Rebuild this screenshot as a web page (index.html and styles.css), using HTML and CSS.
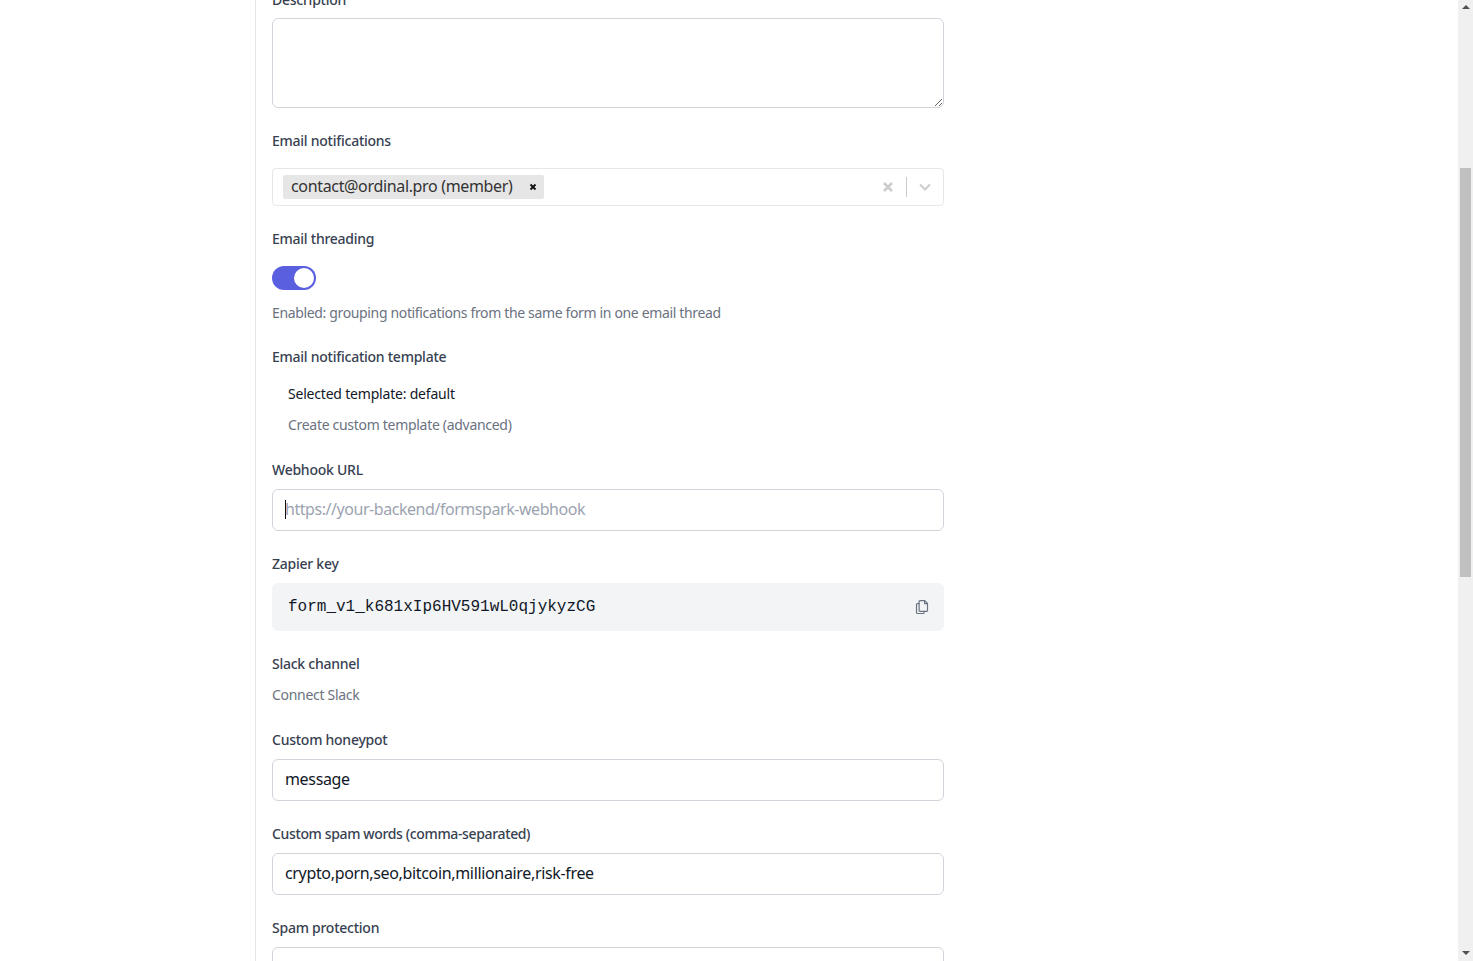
FILE: index.html
```html
<!DOCTYPE html>
<html lang="en">
<head>
    <meta charset="UTF-8">
    <title>Form settings</title>
    <link rel="stylesheet" href="styles.css">
</head>
<body>
    <div class="page">
        <main class="card">
            <div class="field">
                <label class="label">Description</label>
                <textarea class="textarea"></textarea>
            </div>

            <div class="field">
                <label class="label label-wide">Email notifications</label>
                <div class="select">
                    <div class="chip">
                        <span class="chip-text">contact@ordinal.pro (member)</span>
                        <svg class="chip-x" viewBox="0 0 8 8"><path d="M1.5 1.5l5 5M6.5 1.5l-5 5"/></svg>
                    </div>
                    <div class="select-actions">
                        <svg class="select-x" viewBox="0 0 12 12"><path d="M2 2l8 8M10 2l-8 8"/></svg>
                        <span class="select-sep"></span>
                        <svg class="select-chevron" viewBox="0 0 14 8"><path d="M2 1.500l5 5 5-5"/></svg>
                    </div>
                </div>
            </div>

            <div class="field field-toggle">
                <label class="label label-wide">Email threading</label>
                <div class="toggle"><span class="toggle-knob"></span></div>
                <p class="help">Enabled: grouping notifications from the same form in one email thread</p>
            </div>

            <div class="field field-text">
                <label class="label label-wide">Email notification template</label>
                <div class="template-current">Selected template: default</div>
                <div class="link link-indent">Create custom template (advanced)</div>
            </div>

            <div class="field">
                <label class="label">Webhook URL</label>
                <div class="input-wrap">
                    <input class="input input-empty" type="text" placeholder="https://your-backend/formspark-webhook">
                    <span class="caret"></span>
                </div>
            </div>

            <div class="field">
                <label class="label">Zapier key</label>
                <div class="key-box">
                    <code class="key">form_v1_k681xIp6HV591wL0qjykyzCG</code>
                    <svg class="copy" viewBox="0 0 16 16">
                        <path d="M6 1.700h4.800l2.700 2.700v7a.9.9 0 0 1-.9.9H6a.9.9 0 0 1-.9-.9V2.600a.9.9 0 0 1 .9-.9z"/>
                        <path d="M10.600 1.900v2.700h2.700"/>
                        <path d="M5.100 4.600H3.400a.9.9 0 0 0-.9.9v8.100a.9.9 0 0 0 .9.9h5.800a.9.9 0 0 0 .9-.9v-1.300"/>
                    </svg>
                </div>
            </div>

            <div class="field field-text">
                <label class="label label-slim">Slack channel</label>
                <div class="link">Connect Slack</div>
            </div>

            <div class="field">
                <label class="label">Custom honeypot</label>
                <input class="input" type="text" value="message">
            </div>

            <div class="field">
                <label class="label label-tight">Custom spam words (comma-separated)</label>
                <input class="input" type="text" value="crypto,porn,seo,bitcoin,millionaire,risk-free">
            </div>

            <div class="field">
                <label class="label">Spam protection</label>
                <input class="input" type="text" value="manually">
            </div>
        </main>

        <div class="scrollbar">
            <span class="arrow arrow-up"></span>
            <div class="track"><div class="thumb"></div></div>
            <span class="arrow arrow-down"></span>
        </div>
    </div>
</body>
</html>
```

FILE: styles.css
```css
* { box-sizing: border-box; }
html, body { margin: 0; height: 100%; overflow: hidden; background: #fff; }
body { font-family: "Noto Sans", sans-serif; font-size: 14px; line-height: 20px; color: #111827; }

.page { display: flex; height: 961px; overflow: hidden; }

/* the page is scrolled, so the first label is cut off at the top */
.card {
    flex: 1;
    margin: -10px 0 0 255px;
    padding-left: 16px;
    border-left: 1px solid #e5e7eb;
}

.field { width: 672px; margin-bottom: 23px; }
.field-toggle { margin-bottom: 24px; }
.field-text { margin-bottom: 25px; }
.label { display: block; margin-bottom: 9px; font-weight: 500; color: #374151; letter-spacing: -0.25px; }
.label-wide { margin-bottom: 17px; }
.label-slim { margin-bottom: 11px; }
.label-tight { letter-spacing: -0.36px; }

.textarea {
    display: block;
    width: 100%;
    height: 90px;
    margin-top: -1px;
    border: 1px solid #d1d5db;
    border-radius: 6px;
    background: #fff;
}

.select {
    display: flex;
    align-items: center;
    justify-content: space-between;
    height: 38px;
    padding-left: 10px;
    border: 1px solid #e5e7eb;
    border-radius: 4px;
}
.chip {
    display: flex;
    align-items: center;
    justify-content: space-between;
    width: 261px;
    height: 24px;
    padding: 0 7px 2px 8px;
    background: #e6e6e6;
    border-radius: 2px;
    font-size: 16px;
    color: #333;
}
.chip-text { letter-spacing: -0.34px; }
.chip-x { width: 8px; height: 8px; margin-top: 2px; fill: none; stroke: #111; stroke-width: 1.8; }
.select-actions { display: flex; align-items: center; }
.select-x { width: 12px; height: 12px; fill: none; stroke: #ccc; stroke-width: 2.6; }
.select-sep { width: 1px; height: 20px; margin: 0 11px 0 12px; background: #ccc; }
.select-chevron { width: 14px; height: 8px; margin-right: 11px; fill: none; stroke: #ccc; stroke-width: 2; }

.toggle {
    display: flex;
    justify-content: flex-end;
    align-items: center;
    width: 44px;
    height: 24px;
    padding: 2px;
    background: #5a5fe0;
    border-radius: 12px;
}
.toggle-knob { width: 20px; height: 20px; background: #fff; border-radius: 50%; }
.help { margin: 13px 0 0; color: #6b7280; letter-spacing: -0.35px; }

.template-current { padding-left: 16px; margin-bottom: 11px; letter-spacing: -0.2px; }
.link { color: #6b7280; letter-spacing: -0.3px; }
.link-indent { padding-left: 16px; }

.input-wrap { position: relative; }
.input {
    display: block;
    width: 100%;
    height: 42px;
    padding: 0 12px 2px;
    border: 1px solid #d1d5db;
    border-radius: 6px;
    background: #fff;
    font-family: "Noto Sans", sans-serif;
    font-size: 16px;
    letter-spacing: -0.34px;
    color: #111827;
    outline: none;
}
.input-empty { letter-spacing: -0.45px; }
.input::placeholder { color: #9ca3af; opacity: 1; }
.caret { position: absolute; left: 13px; top: 11px; width: 1px; height: 19px; background: #111; }

.key-box {
    display: flex;
    align-items: center;
    justify-content: space-between;
    height: 48px;
    padding: 0 14px 0 16px;
    background: #f3f4f6;
    border-radius: 6px;
}
.key { font-family: "Liberation Mono", monospace; font-size: 16px; color: #111827; }
.copy { width: 16px; height: 16px; fill: none; stroke: #6b7280; stroke-width: 1.2; stroke-linejoin: round; }

.scrollbar { display: flex; flex-direction: column; align-items: center; width: 15px; background: #f0f0f0; }
.track { flex: 1; width: 100%; padding: 153px 2px 0; }
.thumb { height: 409px; background: #c0c0c0; }
.arrow { flex: none; width: 100%; height: 15px; display: flex; justify-content: center; }
.arrow::before {
    content: "";
    width: 0;
    height: 0;
    margin-top: 5px;
    border-left: 4px solid transparent;
    border-right: 4px solid transparent;
}
.arrow-up::before { border-bottom: 4px solid #505050; }
.arrow-down::before { border-top: 4px solid #505050; }
```
